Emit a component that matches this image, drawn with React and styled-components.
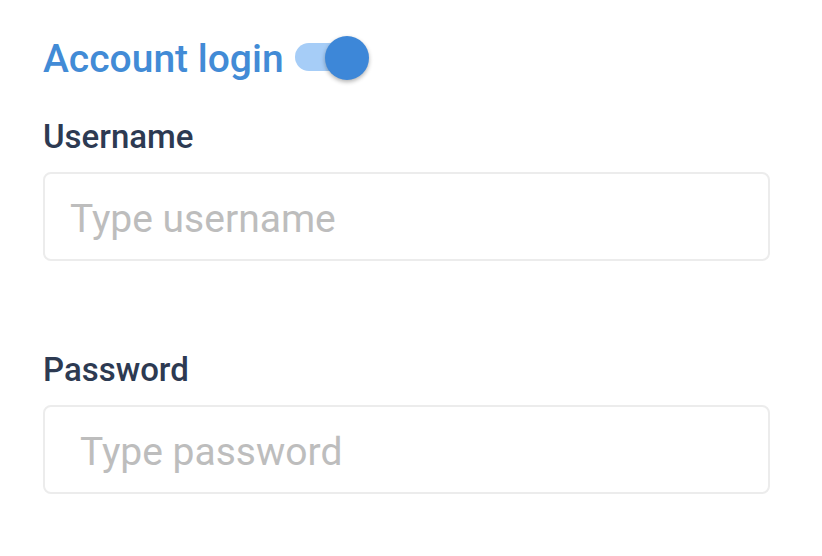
import React from "react";
import styled, { createGlobalStyle } from "styled-components";

const Global = createGlobalStyle`
    body {
        margin: 0;
        background: #ffffff;
        font-family: Roboto, "Noto Sans", sans-serif;
    }
`

const Page = styled.div`
    width: 822px;
    height: 556px;
    padding: 34px 0 0 43px;
    box-sizing: border-box;
`

const TitleRow = styled.div`
    display: flex;
    align-items: center;
    gap: 11px;
    height: 48px;
`

const Title = styled.h2`
    margin: 0;
    font-size: 39px;
    line-height: 48px;
    font-weight: 500;
    color: #428bd6;
    position: relative;
    top: 1px;
`

const Toggle = styled.div`
    position: relative;
    width: 74px;
    height: 44px;
`

const Track = styled.div`
    position: absolute;
    left: 0;
    top: 7px;
    width: 56px;
    height: 28px;
    border-radius: 14px;
    background: #a6cdf7;
`

const Knob = styled.div`
    position: absolute;
    left: 30px;
    top: 0;
    width: 44px;
    height: 44px;
    border-radius: 50%;
    background: #3d87d8;
    box-shadow: 0 2px 4px rgba(0, 0, 0, 0.3);
`

const Field = styled.div`
    display: flex;
    flex-direction: column;
    margin-top: ${p => p.$top}px;
`

const Label = styled.label`
    font-size: 33px;
    font-weight: 500;
    color: #2d3a52;
    line-height: 40px;
`

const Input = styled.input`
    margin-top: 15px;
    width: 727px;
    height: 89px;
    box-sizing: border-box;
    border: 2px solid #ececec;
    border-radius: 8px;
    padding: 5px 0 0 ${p => p.$pad}px;
    font-family: Roboto, sans-serif;
    font-size: 39px;
    outline: none;
    &::placeholder {
        color: #bdbdbd;
    }
`

const App = () => {
    return (
        <>
            <Global />
            <Page>
                <TitleRow>
                    <Title>Account login</Title>
                    <Toggle>
                        <Track />
                        <Knob />
                    </Toggle>
                </TitleRow>
                <Field $top={35}>
                    <Label>Username</Label>
                    <Input $pad={25} placeholder="Type username" />
                </Field>
                <Field $top={89}>
                    <Label>Password</Label>
                    <Input $pad={35} type="password" placeholder="Type password" />
                </Field>
            </Page>
        </>
    )
}

export default App
